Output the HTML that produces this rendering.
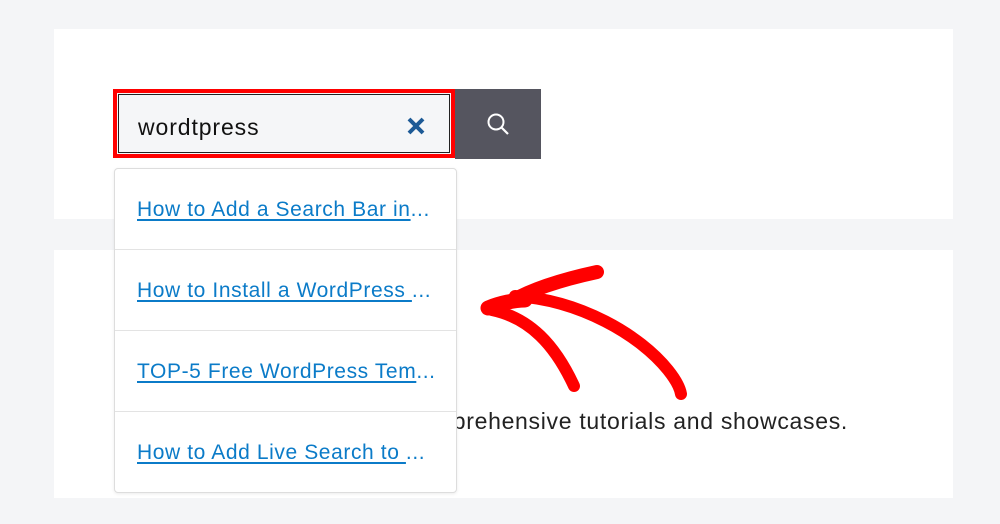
<!DOCTYPE html>
<html><head><meta charset="utf-8"><style>
*{margin:0;padding:0;box-sizing:border-box}
body{width:1000px;height:524px;background:#f4f5f7;position:relative;overflow:hidden;font-family:"Liberation Sans",sans-serif}
.p{position:absolute;left:54px;width:899px;background:#fff}
.inp{position:absolute;left:113px;top:89px;width:342px;height:69px;border:4px solid #f00;background:#f5f6f8;}
.inp:after{content:"";position:absolute;left:1px;top:1px;right:1px;bottom:1px;border:1px solid #222}
.inp span{position:absolute;left:21px;top:21px;font-size:23px;letter-spacing:0.9px;color:#111}
.btn{position:absolute;left:455px;top:89px;width:86px;height:70px;background:#55555f}
.dd{position:absolute;left:114px;top:168px;width:343px;height:325px;background:#fff;border:1px solid #ddd;border-radius:4px;box-shadow:0 1px 3px rgba(0,0,0,.08);z-index:2}
.it{height:81px;border-bottom:1px solid #e3e3e3;padding:29px 0 0 22px;font-size:21px;letter-spacing:0.6px;color:#0b7bc8;white-space:nowrap}
.it:last-child{border-bottom:none}
.it u{text-decoration-thickness:2px;text-underline-offset:3px}
.txt{position:absolute;right:152px;top:408px;font-size:23px;letter-spacing:0.7px;color:#222;white-space:nowrap}
</style></head><body>
<div class="p" style="top:29px;height:190px"></div>
<div class="p" style="top:250px;height:248px"></div>
<div class="txt">mprehensive tutorials and showcases.</div>
<div class="inp"><span>wordtpress</span>
<svg style="position:absolute;left:290px;top:24px" width="18" height="18" viewBox="0 0 18 18"><path d="M2 2L16 16M16 2L2 16" stroke="#1d5a96" stroke-width="4"/></svg></div>
<div class="btn"><svg style="position:absolute;left:31px;top:23px" width="24" height="24" viewBox="0 0 24 24"><circle cx="10" cy="10" r="7.5" fill="none" stroke="#fff" stroke-width="2"/><path d="M15.5 15.5L22 22" stroke="#fff" stroke-width="2.2"/></svg></div>
<div class="dd">
<div class="it"><u>How to Add a Search Bar in</u>...</div>
<div class="it"><u>How to Install a WordPress </u>...</div>
<div class="it"><u>TOP-5 Free WordPress Tem</u>...</div>
<div class="it"><u>How to Add Live Search to </u>...</div>
</div>
<svg style="position:absolute;left:0;top:0;z-index:3" width="1000" height="524">
<g fill="none" stroke="#f00" stroke-linecap="round" stroke-linejoin="round">
<path d="M597 272C560 280 530 290 510 302" stroke-width="14"/>
<path d="M488 308C500 303 515 300 525 300" stroke-width="15"/>
<path d="M492 310C530 318 555 345 574 386" stroke-width="12"/>
<path d="M515 296C580 300 640 335 668 370C676 380 680 388 681 394" stroke-width="12"/>
</g></svg>
</body></html>
